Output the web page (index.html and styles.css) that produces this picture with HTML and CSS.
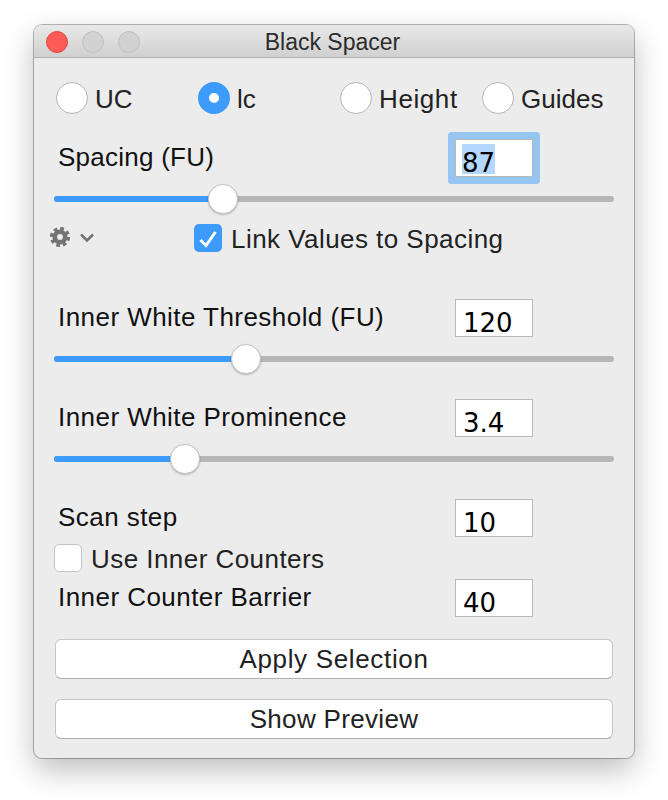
FILE: index.html
```html
<!DOCTYPE html>
<html lang="en">
<head>
    <meta charset="UTF-8">
    <title>Black Spacer</title>
    <link rel="stylesheet" href="styles.css">
</head>
<body>

    <div class="window">
        <!-- Title Bar -->
        <div class="titlebar">
            <div class="lights">
                <span class="light close"></span>
                <span class="light"></span>
                <span class="light"></span>
            </div>
            <span class="title">Black Spacer</span>
        </div>

        <div class="content">
            <!-- Height Radios -->
            <div class="radios">
                <div class="radio-item"><span class="radio"></span><span class="text">UC</span></div>
                <div class="radio-item"><span class="radio on"></span><span class="text">lc</span></div>
                <div class="radio-item"><span class="radio"></span><span class="text wide">Height</span></div>
                <div class="radio-item"><span class="radio"></span><span class="text">Guides</span></div>
            </div>

            <!-- Spacing -->
            <div class="row">
                <span class="label narrow">Spacing (FU)</span>
                <div class="field focus"><span class="selected">87</span></div>
            </div>
            <div class="slider">
                <div class="fill" style="width: 169px"></div>
                <span class="thumb" style="left: 154px"></span>
            </div>

            <div class="options">
                <div class="gear-menu">
                    <svg class="gear" width="20" height="20" viewBox="0 0 20 20">
                        <circle cx="10" cy="10" r="8.4" fill="none" stroke="#737373" stroke-width="3.4" stroke-dasharray="3.6 3"/>
                        <circle cx="10" cy="10" r="5.2" fill="none" stroke="#737373" stroke-width="4.6"/>
                    </svg>
                    <svg class="chevron" width="14" height="9" viewBox="0 0 14 9">
                        <path d="M1 1.5 L7 7.5 L13 1.5" fill="none" stroke="#737373" stroke-width="2.6"/>
                    </svg>
                </div>
                <div class="check-item">
                    <span class="checkbox on">
                        <svg width="28" height="28" viewBox="0 0 28 28">
                            <path d="M6.5 16 L12 21.5 L21.5 8" fill="none" stroke="#fff" stroke-width="3"/>
                        </svg>
                    </span>
                    <span class="text spaced">Link Values to Spacing</span>
                </div>
            </div>

            <!-- Inner White -->
            <div class="row first">
                <span class="label">Inner White Threshold (FU)</span>
                <div class="field">120</div>
            </div>
            <div class="slider">
                <div class="fill" style="width: 192px"></div>
                <span class="thumb" style="left: 177px"></span>
            </div>

            <div class="row">
                <span class="label">Inner White Prominence</span>
                <div class="field">3.4</div>
            </div>
            <div class="slider">
                <div class="fill" style="width: 131px"></div>
                <span class="thumb" style="left: 116px"></span>
            </div>

            <!-- Counters -->
            <div class="row">
                <span class="label">Scan step</span>
                <div class="field">10</div>
            </div>
            <div class="check-item counters">
                <span class="checkbox"></span>
                <span class="text spaced">Use Inner Counters</span>
            </div>
            <div class="row tight">
                <span class="label">Inner Counter Barrier</span>
                <div class="field">40</div>
            </div>

            <!-- Buttons -->
            <button class="btn apply">Apply Selection</button>
            <button class="btn preview">Show Preview</button>
        </div>
    </div>

</body>
</html>
```

FILE: styles.css
```css
body {
    box-sizing: border-box;
    min-height: 800px;
    margin: 0;
    padding: 25px 0 0 34px;
    background-color: #fff;
    font-family: "Liberation Sans", Arial, sans-serif;
    color: #222;
}
.window {
    width: 600px;
    border-radius: 8px;
    background-color: #ececec;
    box-shadow: 0 0 0 1px rgba(0, 0, 0, 0.28), 0 12px 30px rgba(0, 0, 0, 0.26);
}
.titlebar {
    position: relative;
    display: flex;
    justify-content: center;
    align-items: center;
    height: 32px;
    border-radius: 8px 8px 0 0;
    border-bottom: 1px solid #b1b1b1;
    background: linear-gradient(#e9e9e9, #d0d0d0);
}
.title {
    margin: 2px 3px 0 0;
    font-size: 23px;
    color: #2c2c2c;
}
.lights {
    position: absolute;
    top: 6px;
    left: 12px;
    display: flex;
    gap: 14px;
}
.light {
    width: 20px;
    height: 20px;
    border: 1px solid #c0c0c0;
    border-radius: 50%;
    background-color: #d2d2d2;
}
.light.close {
    border-color: #e2463f;
    background-color: #fc5b57;
}
.content {
    padding: 24px 20px 19px;
}
.radios {
    display: grid;
    grid-template-columns: repeat(4, 142px);
    padding-left: 2px;
}
.radio-item {
    display: flex;
    align-items: center;
    gap: 7px;
    height: 32px;
    font-size: 26px;
}
.text {
    margin-top: 2px;
}
.text.wide {
    letter-spacing: 0.6px;
}
.text.spaced {
    letter-spacing: 0.45px;
}
.radio {
    box-sizing: border-box;
    width: 32px;
    height: 32px;
    border: 1px solid #b5b5b5;
    border-radius: 50%;
    background-color: #fff;
}
.radio.on {
    border: 11px solid #3d9bfb;
}
.row {
    display: flex;
    justify-content: space-between;
    align-items: center;
    margin-top: 25px;
    padding: 0 81px 0 4px;
}
.row.first {
    margin-top: 47px;
}
.row.tight {
    margin-top: 7px;
}
.label {
    margin-top: -2px;
    font-size: 26px;
    letter-spacing: 0.45px;
    color: #111;
}
.label.narrow {
    letter-spacing: 0.25px;
}
.field {
    box-sizing: border-box;
    width: 78px;
    height: 38px;
    padding: 4px 0 0 7px;
    border: 1px solid #b9b9b9;
    background-color: #fff;
    font-family: "DejaVu Sans", sans-serif;
    font-size: 26px;
    line-height: 38px;
    color: #000;
}
.field.focus {
    padding-left: 6px;
    border-radius: 1px;
    box-shadow: 0 0 0 7px #97c5f2;
}
.selected {
    display: inline-block;
    height: 30px;
    background-color: #b3d7ff;
}
.slider {
    position: relative;
    height: 6px;
    margin-top: 7px;
    padding: 12px 0;
}
.slider::before {
    content: "";
    display: block;
    height: 6px;
    border-radius: 3px;
    background-color: #b6b6b6;
}
.fill {
    position: absolute;
    top: 12px;
    left: 0;
    height: 6px;
    border-radius: 3px 0 0 3px;
    background-color: #3d9bfb;
}
.thumb {
    position: absolute;
    top: 0;
    box-sizing: border-box;
    width: 30px;
    height: 30px;
    border: 1px solid #c4c4c4;
    border-radius: 50%;
    background-color: #fff;
    box-shadow: 0 1px 2px rgba(0, 0, 0, 0.25);
}
.options {
    display: flex;
    align-items: center;
    margin-top: 10px;
}
.gear-menu {
    display: flex;
    align-items: center;
    gap: 10px;
    width: 144px;
    margin: -3px 0 0 -4px;
}
.chevron {
    margin-top: 2px;
}
.check-item {
    display: flex;
    align-items: center;
    gap: 9px;
    height: 28px;
    font-size: 26px;
}
.counters {
    margin-top: 7px;
}
.checkbox {
    box-sizing: border-box;
    width: 28px;
    height: 28px;
    border: 1px solid #c4c4c4;
    border-radius: 5px;
    background-color: #fff;
}
.checkbox.on {
    border: 0;
    background-color: #3d9bfb;
}
.checkbox svg {
    display: block;
}
.btn {
    display: block;
    box-sizing: border-box;
    width: 558px;
    height: 40px;
    margin: 20px 0 0 1px;
    padding: 0;
    border: 1px solid #c6c6c6;
    border-bottom-color: #adadad;
    border-radius: 6px;
    background-color: #fff;
    font-family: "Liberation Sans", Arial, sans-serif;
    font-size: 26px;
    letter-spacing: 0.33px;
    color: #222;
}
.btn.apply {
    margin-top: 22px;
    letter-spacing: 0.66px;
}
```
